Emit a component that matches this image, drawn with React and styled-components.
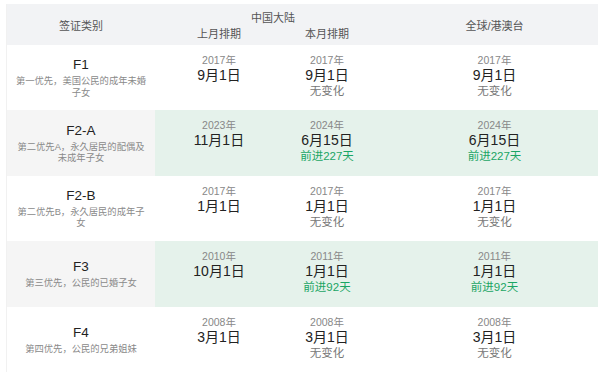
import React from 'react';
import styled, { createGlobalStyle } from 'styled-components';

const GlobalStyle = createGlobalStyle`
  body {
    margin: 0;
    background: #fff;
    font-family: "Liberation Sans", "Noto Sans CJK SC", sans-serif;
  }
`;

const COLUMNS = '148px 128px 88px 1fr';

const Table = styled.div`
  margin: 4px 2px 0 6px;
  width: 592px;
  border-left: 1px solid #f1f1f1;
  box-sizing: border-box;
`;

const Header = styled.div`
  display: grid;
  grid-template-columns: ${COLUMNS};
  grid-template-rows: 21px 20px;
  background: #f2f3f5;
  color: #555;
  font-size: 11px;
`;

const HeadCell = styled.div`
  display: flex;
  align-items: center;
  justify-content: center;
  padding-left: ${(p) => p.$shift || 0}px;
  grid-column: ${(p) => p.$col || 'auto'};
  grid-row: ${(p) => p.$row || 'auto'};
  ${(p) => p.$align === 'top' && 'align-items: flex-end;'}
  ${(p) => p.$align === 'bottom' && 'align-items: flex-start;'}
`;

const Row = styled.div`
  display: grid;
  grid-template-columns: ${COLUMNS};
  height: 65.4px;
  background: ${(p) => (p.$hl ? '#e5f2eb' : '#fff')};
`;

const Label = styled.div`
  display: flex;
  flex-direction: column;
  align-items: center;
  justify-content: center;
  background: ${(p) => (p.$hl ? '#f5f5f5' : '#fff')};
  text-align: center;
`;

const Code = styled.div`
  font-size: 13.5px;
  line-height: 18px;
  color: #222;
`;

const Desc = styled.div`
  margin-top: 2px;
  width: 134px;
  font-size: 9.3px;
  line-height: 11.5px;
  color: #8a8a8a;
`;

const Cell = styled.div`
  display: flex;
  flex-direction: column;
  align-items: center;
  padding-top: 8px;
  padding-left: ${(p) => p.$shift || 0}px;
`;

const Year = styled.div`
  font-size: 10.5px;
  line-height: 14px;
  color: #888;
`;

const DateText = styled.div`
  font-size: 14px;
  line-height: 16px;
  color: #222;
`;

const Status = styled.div`
  font-size: 11.5px;
  line-height: 17px;
  color: ${(p) => (p.$up ? '#1aa564' : '#777')};
`;

const rows = [
  {
    code: 'F1',
    desc: '第一优先，美国公民的成年未婚子女',
    last: ['2017年', '9月1日'],
    now: ['2017年', '9月1日', '无变化'],
    world: ['2017年', '9月1日', '无变化'],
  },
  {
    code: 'F2-A',
    desc: '第二优先A，永久居民的配偶及未成年子女',
    last: ['2023年', '11月1日'],
    now: ['2024年', '6月15日', '前进227天'],
    world: ['2024年', '6月15日', '前进227天'],
    hl: true,
  },
  {
    code: 'F2-B',
    desc: '第二优先B，永久居民的成年子女',
    last: ['2017年', '1月1日'],
    now: ['2017年', '1月1日', '无变化'],
    world: ['2017年', '1月1日', '无变化'],
  },
  {
    code: 'F3',
    desc: '第三优先，公民的已婚子女',
    last: ['2010年', '10月1日'],
    now: ['2011年', '1月1日', '前进92天'],
    world: ['2011年', '1月1日', '前进92天'],
    hl: true,
  },
  {
    code: 'F4',
    desc: '第四优先，公民的兄弟姐妹',
    last: ['2008年', '3月1日'],
    now: ['2008年', '3月1日', '无变化'],
    world: ['2008年', '3月1日', '无变化'],
  },
];

const DateCell = ({ data, shift }) => (
  <Cell $shift={shift}>
    <Year>{data[0]}</Year>
    <DateText>{data[1]}</DateText>
    {data[2] && <Status $up={data[2] !== '无变化'}>{data[2]}</Status>}
  </Cell>
);

export default function App() {
  return (
    <>
      <GlobalStyle />
      <Table>
        <Header>
          <HeadCell $col="1" $row="1 / span 2">签证类别</HeadCell>
          <HeadCell $col="2 / span 2" $row="1" $shift={20} $align="top">
            中国大陆
          </HeadCell>
          <HeadCell $col="2" $row="2" $align="bottom">上月排期</HeadCell>
          <HeadCell $col="3" $row="2" $align="bottom">本月排期</HeadCell>
          <HeadCell $col="4" $row="1 / span 2" $shift={20}>全球/港澳台</HeadCell>
        </Header>
        {rows.map((r) => (
          <Row key={r.code} $hl={r.hl}>
            <Label $hl={r.hl}>
              <Code>{r.code}</Code>
              <Desc>{r.desc}</Desc>
            </Label>
            <DateCell data={r.last} />
            <DateCell data={r.now} />
            <DateCell data={r.world} shift={20} />
          </Row>
        ))}
      </Table>
    </>
  );
}
